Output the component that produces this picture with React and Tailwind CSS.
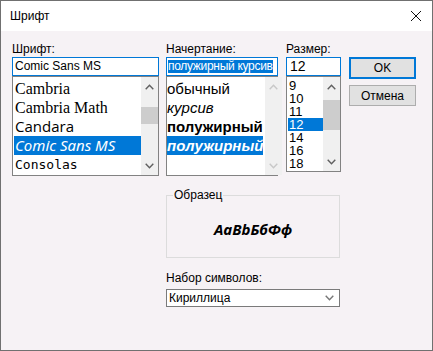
import React from 'react';

const SANS = "font-['Liberation_Sans',Arial,sans-serif]";

const Chev = ({ up, color = '#606060' }) => (
  <svg width="9" height="6" viewBox="0 0 9 6">
    <path d={up ? 'M0.7 5.2 L4.5 1.2 L8.3 5.2' : 'M0.7 0.8 L4.5 4.8 L8.3 0.8'} fill="none" stroke={color} strokeWidth="1.4" />
  </svg>
);

// vertical scrollbar of a list box
const ScrollBar = ({ disabled, thumbTop, thumbH, upH = 20, downH = 20 }) => {
  const col = disabled ? '#c8c8c8' : '#606060';
  return (
    <div className="w-[17px] h-full bg-[#f0f0f0] flex flex-col shrink-0">
      <div className="flex items-center justify-center" style={{ height: upH }}>
        <Chev up color={col} />
      </div>
      <div className="flex-1 flex flex-col items-center">
        {!disabled && <div className="w-[17px] bg-[#cdcdcd]" style={{ marginTop: thumbTop, height: thumbH }} />}
      </div>
      <div className="flex items-center justify-center" style={{ height: downH }}>
        <Chev color={col} />
      </div>
    </div>
  );
};

const fonts = [
  { name: 'Cambria', cls: "font-['Liberation_Serif',serif] text-[16px]" },
  { name: 'Cambria Math', cls: "font-['Liberation_Serif',serif] text-[16px]" },
  { name: 'Candara', cls: "font-['Open_Sans',sans-serif] text-[15px]" },
  { name: 'Comic Sans MS', cls: "font-['Comic_Sans_MS','Noto_Sans',sans-serif] italic text-[15px]", sel: true },
  { name: 'Consolas', cls: "font-['DejaVu_Sans_Mono',monospace] text-[13px]" },
];

const styles = [
  { name: 'обычный', cls: '' },
  { name: 'курсив', cls: 'italic' },
  { name: 'полужирный', cls: 'font-bold' },
  { name: 'полужирный', cls: 'font-bold italic', sel: true },
];

const sizes = ['9', '10', '11', '12', '14', '16', '18'];

export default function App() {
  return (
    <div className={`w-[433px] h-[351px] border border-[#707070] bg-[#f6f2f5] flex flex-col text-black ${SANS}`}>
      {/* title bar */}
      <div className="h-[30px] bg-white flex items-center justify-between pl-[9px] pr-[9px] shrink-0">
        <span className="text-[12px]">Шрифт</span>
        <svg width="12" height="12" viewBox="0 0 12 12" className="mr-[1px]">
          <path d="M1 1 L11 11 M11 1 L1 11" stroke="#111" strokeWidth="1" />
        </svg>
      </div>

      <div className="flex flex-col pl-[11px] pt-[10px]">
        <div className="flex">
          {/* font name */}
          <div className="w-[147px] flex flex-col">
            <div className="h-[16px] text-[12px] leading-[16px]">Шрифт:</div>
            <div className="h-[19px] border border-[#0078d7] bg-white px-[2px] text-[12px] leading-[17px]">Comic Sans MS</div>
            <div className="h-[100px] border border-[#828282] bg-white flex">
              <div className="flex-1 pt-[2px] pl-[1px]">
                {fonts.map(f => (
                  <div key={f.name} className={`h-[19px] leading-[19px] pl-[1px] whitespace-nowrap ${f.cls} ${f.sel ? 'bg-[#0078d7] text-white' : ''}`}>
                    {f.name}
                  </div>
                ))}
              </div>
              <ScrollBar thumbTop={10} thumbH={17} upH={20} downH={18} />
            </div>
          </div>

          {/* style */}
          <div className="w-[112px] flex flex-col ml-[7px]">
            <div className="h-[16px] text-[12px] leading-[16px]">Начертание:</div>
            <div className="h-[19px] border border-[#0078d7] bg-white px-[1px] flex items-center text-[12px] tracking-[-0.3px] overflow-hidden whitespace-nowrap">
              <span className="bg-[#0078d7] text-white leading-[13px]">полужирный курсив</span>
            </div>
            <div className="h-[100px] border border-[#828282] bg-white flex">
              <div className="flex-1 pt-[2px] pr-[2px]">
                {styles.map((s, i) => (
                  <div key={i} className={`h-[19px] leading-[19px] text-[15px] whitespace-nowrap ${s.cls} ${s.sel ? 'bg-[#0078d7] text-white' : ''}`}>
                    {s.name}
                  </div>
                ))}
              </div>
              <ScrollBar disabled upH={20} downH={18} />
            </div>
          </div>

          {/* size */}
          <div className="w-[55px] flex flex-col ml-[8px]">
            <div className="h-[16px] text-[12px] leading-[16px]">Размер:</div>
            <div className="h-[19px] border border-[#0078d7] bg-white px-[3px] text-[14px] leading-[17px]">12</div>
            <div className="h-[96px] border border-[#828282] bg-white flex">
              <div className="flex-1 pt-[2px] pl-[1px]">
                {sizes.map(s => (
                  <div key={s} className={`h-[13px] leading-[13px] text-[13px] pl-[1px] overflow-hidden ${s === '12' ? 'bg-[#0078d7] text-white' : ''}`}>
                    {s}
                  </div>
                ))}
              </div>
              <ScrollBar thumbTop={3} thumbH={30} upH={20} downH={18} />
            </div>
          </div>

          {/* buttons */}
          <div className="w-[67px] flex flex-col ml-[8px] pt-[16px] gap-[6px]">
            <button className="h-[22px] border-2 border-[#0078d7] bg-[#e1e1e1] text-[12px]">OK</button>
            <button className="h-[21px] border border-[#adadad] bg-[#e1e1e1] text-[12px]">Отмена</button>
          </div>
        </div>

        {/* sample + charset */}
        <div className="ml-[154px] w-[174px] flex flex-col">
          <fieldset className="mt-[11px] h-[71px] border border-[#dcdcdc] px-0">
            <legend className="ml-[6px] px-[1px] text-[12px] leading-[16px]">Образец</legend>
            <div className="mt-[16px] text-center leading-[20px] text-[15px] font-bold italic font-['Noto_Sans',sans-serif]">AaBbБбФф</div>
          </fieldset>
          <div className="mt-[12px] h-[16px] text-[12px] leading-[16px]">Набор символов:</div>
          <div className="mt-[3px] h-[18px] border border-[#7a7a7a] bg-white flex items-center justify-between pl-[2px] pr-[5px] text-[12px]">
            <span>Кириллица</span>
            <Chev color="#777" />
          </div>
        </div>
      </div>
    </div>
  );
}
